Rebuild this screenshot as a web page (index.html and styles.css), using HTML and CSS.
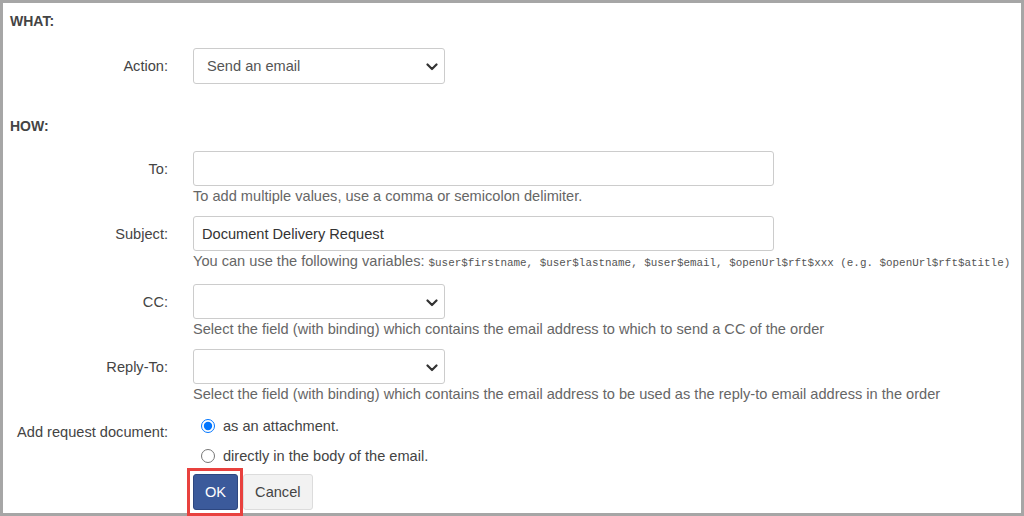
FILE: index.html
```html
<!DOCTYPE html>
<html lang="en">
<head>
  <meta charset="UTF-8" />
  <title>Send an email</title>
  <link rel="stylesheet" href="styles.css">
</head>
<body>
  <div class="panel">
    <div class="section-title">WHAT:</div>

    <div class="row row-action">
      <label class="row-label label-tall">Action:</label>
      <div class="select-wrap select-tall">
        <select class="select">
          <option>Send an email</option>
        </select>
        <svg class="chevron" width="12" height="8" viewBox="0 0 12 8"><path d="M1.5 1.5 L6 6 L10.5 1.5" fill="none" stroke="#333" stroke-width="2.2" stroke-linecap="round" stroke-linejoin="round"/></svg>
      </div>
    </div>

    <div class="section-title section-how">HOW:</div>

    <div class="row row-to">
      <label class="row-label">To:</label>
      <input class="text-input" type="text" value="">
      <div class="help">To add multiple values, use a comma or semicolon delimiter.</div>
    </div>

    <div class="row">
      <label class="row-label">Subject:</label>
      <input class="text-input" type="text" value="Document Delivery Request">
      <div class="help">You can use the following variables: <code>$user$firstname, $user$lastname, $user$email, $openUrl$rft$xxx (e.g. $openUrl$rft$atitle)</code></div>
    </div>

    <div class="row row-cc">
      <label class="row-label">CC:</label>
      <div class="select-wrap">
        <select class="select"><option></option></select>
        <svg class="chevron" width="12" height="8" viewBox="0 0 12 8"><path d="M1.5 1.5 L6 6 L10.5 1.5" fill="none" stroke="#333" stroke-width="2.2" stroke-linecap="round" stroke-linejoin="round"/></svg>
      </div>
      <div class="help">Select the field (with binding) which contains the email address to which to send a CC of the order</div>
    </div>

    <div class="row">
      <label class="row-label">Reply-To:</label>
      <div class="select-wrap">
        <select class="select"><option></option></select>
        <svg class="chevron" width="12" height="8" viewBox="0 0 12 8"><path d="M1.5 1.5 L6 6 L10.5 1.5" fill="none" stroke="#333" stroke-width="2.2" stroke-linecap="round" stroke-linejoin="round"/></svg>
      </div>
      <div class="help">Select the field (with binding) which contains the email address to be used as the reply-to email address in the order</div>
    </div>

    <div class="row row-radio">
      <label class="row-label row-label-radio">Add request document:</label>
      <div class="radio-group">
        <label class="radio-line"><input type="radio" name="doc" checked> as an attachment.</label>
        <label class="radio-line"><input type="radio" name="doc"> directly in the body of the email.</label>
      </div>
    </div>

    <div class="row row-buttons">
      <div></div>
      <div class="buttons">
        <span class="highlight"><button class="btn btn-ok">OK</button></span>
        <button class="btn btn-cancel">Cancel</button>
      </div>
    </div>
  </div>
</body>
</html>
```

FILE: styles.css
```css
html, body {
  margin: 0;
  padding: 0;
  background: #fff;
}
body {
  font-family: 'Liberation Sans', Arial, sans-serif;
  font-size: 14.6px;
  color: #444;
}
.panel {
  width: 1024px;
  height: 516px;
  box-sizing: border-box;
  border: 3px solid #a6a6a6;
  padding: 8px 0 0 7px;
}
.section-title {
  font-weight: bold;
  font-size: 14px;
  line-height: 20px;
  color: #444;
}
.section-how {
  margin-top: 32px;
}
.row {
  display: grid;
  grid-template-columns: 183px 1fr;
  margin-top: 10px;
}
.row-action {
  margin-top: 17px;
}
.row-to {
  margin-top: 15px;
}
.row-cc {
  margin-top: 11px;
}
.row-radio {
  margin-top: 7px;
}
.row-buttons {
  margin-top: 3px;
}
.row-label {
  text-align: right;
  padding: 2px 25px 0 0;
  line-height: 33px;
  color: #444;
}
.label-tall {
  padding-top: 1px;
  line-height: 35px;
}
.row-label-radio {
  line-height: 20px;
  padding-top: 11px;
}
.text-input {
  width: 581px;
  height: 35px;
  box-sizing: border-box;
  border: 1px solid #ccc;
  border-radius: 3px;
  padding: 0 8px;
  font-family: inherit;
  font-size: 14.6px;
  color: #333;
  outline: none;
}
.help {
  grid-column: 2;
  line-height: 20px;
  color: #666;
  white-space: nowrap;
}
.help code {
  font-family: 'Liberation Mono', 'DejaVu Sans Mono', monospace;
  font-size: 10.9px;
  color: #555;
}
.select-wrap {
  position: relative;
  width: 252px;
  height: 35px;
}
.select-tall {
  height: 36px;
}
.select {
  appearance: none;
  -webkit-appearance: none;
  width: 100%;
  height: 100%;
  box-sizing: border-box;
  border: 1px solid #ccc;
  border-radius: 3px;
  background: #fff;
  padding: 0 30px 0 13px;
  font-family: inherit;
  font-size: 14.6px;
  color: #555;
  outline: none;
}
.chevron {
  position: absolute;
  right: 7px;
  top: 50%;
  margin-top: -3px;
  pointer-events: none;
}
.radio-group {
  padding-left: 8px;
}
.radio-line {
  display: flex;
  align-items: center;
  height: 30px;
  color: #444;
}
.radio-line input {
  width: 14px;
  height: 14px;
  margin: 0 8px 0 0;
  accent-color: #0075ff;
}
.buttons {
  display: flex;
  gap: 5px;
}
.highlight {
  position: relative;
  display: flex;
}
.highlight::after {
  content: "";
  position: absolute;
  left: -6px;
  right: -5px;
  top: -6px;
  bottom: -6px;
  border: 3px solid #e8413e;
  pointer-events: none;
}
.btn {
  height: 36px;
  padding: 0 11px;
  border-radius: 3px;
  font-family: inherit;
  font-size: 14.6px;
  cursor: pointer;
}
.btn-ok {
  background: #3b5a9b;
  border: 1px solid #2d4780;
  color: #fff;
}
.btn-cancel {
  background: #f2f2f2;
  border: 1px solid #dcdcdc;
  color: #444;
}
```
